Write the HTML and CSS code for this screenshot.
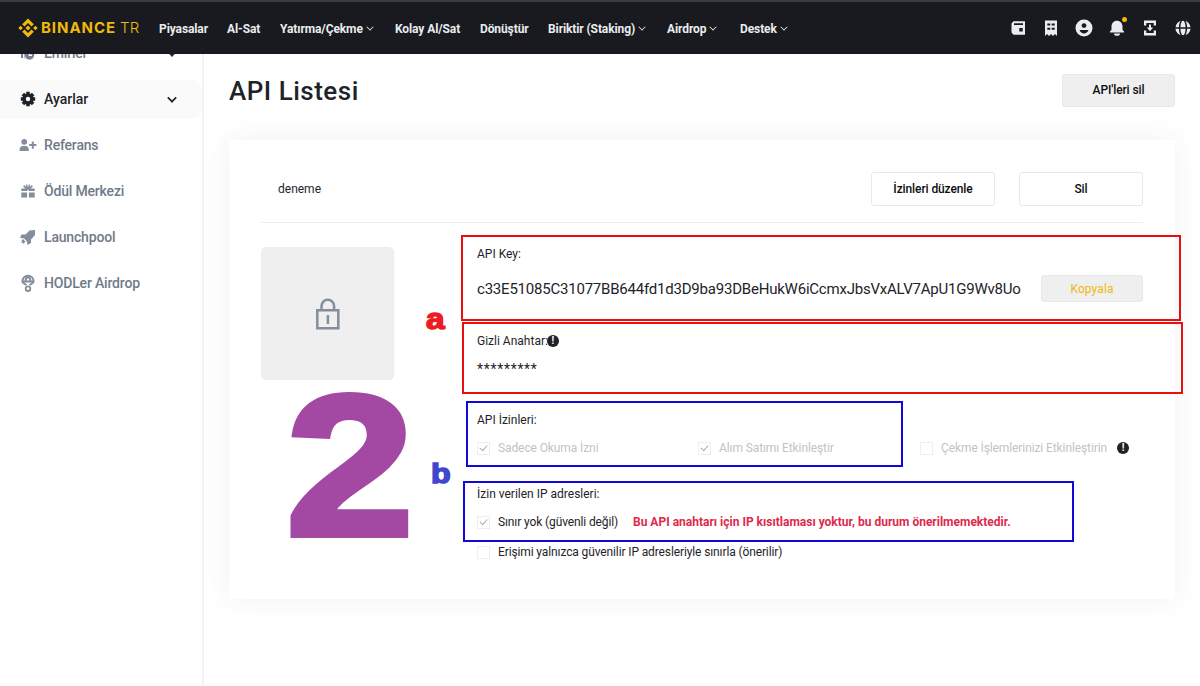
FILE: index.html
```html
<!DOCTYPE html>
<html lang="tr">
<head>
<meta charset="UTF-8">
<meta name="viewport" content="width=device-width, initial-scale=1.0">
<title>API Listesi</title>
<link rel="stylesheet" href="styles.css">
</head>
<body>
<header class="topbar">
<a class="logo">
<svg width="20" height="20" viewBox="0 0 20 20" fill="#f0b90b">
<path d="M10 0.4 15.8 6.2 13.5 8.4 10 4.9 6.5 8.4 4.2 6.2zM10 19.6 15.8 13.8 13.5 11.6 10 15.1 6.5 11.6 4.2 13.8zM2.6 7.7 4.9 10 2.6 12.3 0.3 10zM17.4 7.7 19.7 10 17.4 12.3 15.1 10zM10 7.4 12.6 10 10 12.6 7.4 10z"/>
</svg>
<span class="brand">BINANCE</span><span class="brand-tr">TR</span>
</a>
<nav class="menu">
<a>Piyasalar</a>
<a>Al-Sat</a>
<a class="w-cekme">Yatırma/Çekme</a>
<a>Kolay Al/Sat</a>
<a>Dönüştür</a>
<a class="w-staking">Biriktir (Staking)</a>
<a class="w-airdrop">Airdrop</a>
<a class="w-destek">Destek</a>
</nav>
<div class="tools">
<svg width="20" height="20" viewBox="0 0 20 20" fill="#eaecef"><path fill-rule="evenodd" d="M3.500 5.500 5.500 3.200H17v13.600H5.500L3.500 14.500zM6 5.200v1.800H15V5.200zM11.300 10v3.500H14.700V10z"/></svg>
<svg width="20" height="20" viewBox="0 0 20 20" fill="#eaecef"><path fill-rule="evenodd" d="M4 2.500h12V18l-2-2-2 2-2-2-2 2-2-2-2 2zM6.300 5.600v1.900h3V5.600zM10.700 5.600v1.900h3V5.600zM6.300 9.800v1.900h3V9.800zM10.700 9.800v1.900h3V9.800z"/></svg>
<svg width="20" height="20" viewBox="0 0 20 20"><circle cx="10" cy="10" r="8.500" fill="#eaecef"/><circle cx="10" cy="7.600" r="2.400" fill="#181a20"/><path d="M5.500 12h9c-.8 2.300-2.500 3.400-4.500 3.400S6.300 14.300 5.500 12z" fill="#181a20"/></svg>
<span class="bell"><svg width="20" height="20" viewBox="0 0 20 20" fill="#eaecef"><path d="M4.500 9c0-3.800 2.200-6.200 5.500-6.200s5.500 2.400 5.500 6.200v3l1.600 1.500v1H2.900v-1L4.500 12zM7 15.500h6a3 2.300 0 0 1-6 0z"/></svg><i class="dot"></i></span>
<svg width="20" height="20" viewBox="0 0 20 20" fill="#eaecef"><path d="M4 2.500h12v5h-2.300V5H6.300v2.500H4zM4 17.500h12v-5h-2.300V15H6.300v-2.500H4zM9 6.500h2v3h2.200L10 13.300 6.800 9.500H9z"/></svg>
<svg width="20" height="20" viewBox="0 0 20 20" fill="none" stroke="#181a20" stroke-width="1.500"><circle cx="10" cy="10" r="7.600" fill="#eaecef" stroke="none"/><ellipse cx="10" cy="10" rx="3.400" ry="8.200"/><path d="M2 10h16"/></svg>
</div>
</header>

<div class="page">
<aside class="sidebar">
<a class="side-item arrow">
<svg width="18" height="18" viewBox="0 0 18 18" fill="#76808f"><path d="M2 3h4v2H4v9H2zM7 3h2v3.500A5 5 0 0 0 5.500 11v3.500H5V8z"/><circle cx="10.500" cy="11" r="4.700"/><path d="M10.500 8v3.200H13" stroke="#fff" stroke-width="1.600" fill="none"/></svg>
<span>Emirler</span>
</a>
<a class="side-item arrow active">
<svg width="18" height="18" viewBox="0 0 18 18"><g fill="#1e2329"><circle cx="9" cy="9" r="5.700"/><path d="M7.200 1.800h3.600v14.400H7.200zM1.800 7.200h14.400v3.600H1.800z"/><path d="M7.200 1.800h3.600v14.400H7.200zM1.800 7.200h14.400v3.600H1.800z" transform="rotate(45 9 9)"/></g><circle cx="9" cy="9" r="2.200" fill="#fafafa"/></svg>
<span>Ayarlar</span>
</a>
<a class="side-item">
<svg width="18" height="18" viewBox="0 0 18 18" fill="#848e9c"><circle cx="5.200" cy="5.800" r="2.900"/><path d="M.7 15v-1.700c0-2 1.200-3.300 3-3.300h3c1.800 0 3 1.300 3 3.300V15zM12.800 5.500h2v2.600h2.600v2h-2.600v2.600h-2v-2.600h-2.600v-2h2.600z"/></svg>
<span>Referans</span>
</a>
<a class="side-item">
<svg width="18" height="18" viewBox="0 0 18 18" fill="#848e9c"><path d="M2.300 10.500h5.800v5H2.300zM9.900 10.500h5.800v5H9.900zM2.300 6.500h4L4 4.200l1.300-1.200 2 2-.4-2.500h1.300L9 5.200l.8-2.700h1.300L10.700 5l2-2L14 4.200l-2.300 2.300h4v2.400H9.900l-.9-1.700-.9 1.700H2.300z"/></svg>
<span>Ödül Merkezi</span>
</a>
<a class="side-item">
<svg width="18" height="18" viewBox="0 0 18 18" fill="#848e9c"><path d="M16 2v5L12 11.500V15l-3.500 2-.8-4L5 10.500 1 9.700 2.500 6.500h4L10.500 2.500z"/><path d="M4.200 11.300 6.800 14l-1.700.6.200 1.600-1.700-1.400-1.500.2 1-1.500-.6-1.600z"/></svg>
<span>Launchpool</span>
</a>
<a class="side-item">
<svg width="18" height="18" viewBox="0 0 18 18" fill="none" stroke="#848e9c"><path d="M3.300 8C3.300 4 5.800 1.800 9 1.800S14.700 4 14.700 8M2.500 7.500h13M6.500 7.500 7 4.500 9 3l2 1.500.5 3M3.500 8.500l4 2.500M14.500 8.500l-4 2.500" stroke-width="2"/><circle cx="9" cy="14.700" r="2.300" stroke-width="1.800"/></svg>
<span>HODLer Airdrop</span>
</a>
</aside>

<main class="content">
<div class="title-row">
<h1>API Listesi</h1>
<button class="btn btn-gray">API'leri sil</button>
</div>

<section class="card">
<div class="card-head">
<span class="key-name">deneme</span>
<button class="btn btn-white">İzinleri düzenle</button>
<button class="btn btn-white">Sil</button>
</div>
<div class="card-body">
<div class="qr-box">
<svg width="26" height="32" viewBox="0 0 26 32" fill="none" stroke="#848e9c" stroke-width="2.500"><path d="M2.300 12.300h21v18h-21zM6.500 12V8a6.300 6.300 0 0 1 12.600 0v4M12.900 17v9"/></svg>
</div>
<div class="details">
<div class="line">API Key:</div>
<div class="key-row">
<span class="api-key">c33E51085C31077BB644fd1d3D9ba93DBeHukW6iCcmxJbsVxALV7ApU1G9Wv8Uo</span>
<button class="btn btn-copy">Kopyala</button>
</div>
<div class="line secret"><span>Gizli Anahtar:</span><b class="info"></b></div>
<div class="line stars">*********</div>
<div class="line perm-title">API İzinleri:</div>
<div class="perms">
<label><i class="box checked"></i><span>Sadece Okuma İzni</span></label>
<label><i class="box checked"></i><span>Alım Satımı Etkinleştir</span></label>
<label><i class="box"></i><span>Çekme İşlemlerinizi Etkinleştirin</span><b class="info"></b></label>
</div>
<div class="line ip-title">İzin verilen IP adresleri:</div>
<div class="ip-row">
<i class="box checked"></i><span class="ip-free">Sınır yok (güvenli değil)</span>
<strong class="warn">Bu API anahtarı için IP kısıtlaması yoktur, bu durum önerilmemektedir.</strong>
</div>
<div class="ip-row last">
<i class="box"></i><span>Erişimi yalnızca güvenilir IP adresleriyle sınırla (önerilir)</span>
</div>
</div>
</div>
</section>
</main>
</div>

<!-- notes drawn over the page -->
<div class="mark red mark-key"></div>
<div class="mark red mark-secret"></div>
<div class="mark blue mark-perms"></div>
<div class="mark blue mark-ip"></div>
<span class="note note-a">a</span>
<span class="note note-b">b</span>
<span class="note note-2">2</span>
</body>
</html>
```
FILE: styles.css
```css
* {
box-sizing: border-box;
}

body {
margin: 0;
font-family: Roboto, "Noto Sans", sans-serif;
font-size: 12px;
color: #1e2329;
background: #fff;
height: 686px;
overflow: hidden;
position: relative;
}

/* header */
.topbar {
height: 54px;
background: #181a20;
border-top: 2px solid #3b3c3f;
display: flex;
align-items: center;
padding: 0 7px 0 18px;
position: relative;
z-index: 2;
}

.logo {
display: flex;
align-items: center;
width: 141px;
color: #f0b90b;
font-family: Inter, sans-serif;
font-size: 15px;
line-height: 20px;
}

.brand {
font-weight: 700;
letter-spacing: 0.95px;
margin-left: 3px;
width: 79px;
}

.brand-tr {
font-weight: 300;
letter-spacing: 0.3px;
}

.menu {
display: grid;
grid-template-columns: 68px 53px 115px 85px 68px 119px 73px 60px;
color: #eaecef;
font-weight: 700;
letter-spacing: -0.1px;
line-height: 20px;
padding-top: 1px;
white-space: nowrap;
}

.menu a {
display: flex;
align-items: center;
}

.w-cekme::after, .w-staking::after, .w-airdrop::after, .w-destek::after {
content: "";
width: 5px;
height: 5px;
margin: -3px 0 0 4px;
border: solid #eaecef;
border-width: 0 1.5px 1.5px 0;
transform: rotate(45deg) scale(0.85);
}

.tools {
display: flex;
gap: 13px;
margin-left: auto;
height: 20px;
}

.bell {
position: relative;
height: 20px;
}

.dot {
position: absolute;
right: 0;
top: -1px;
width: 5px;
height: 5px;
border-radius: 50%;
background: #f0b90b;
}

.page {
display: flex;
height: 632px;
}

/* sidebar */
.sidebar {
width: 204px;
flex: none;
border-right: 2px solid #f2f3f4;
margin-top: -20px;
display: flex;
flex-direction: column;
gap: 7px;
}

.side-item {
height: 39px;
flex: none;
display: flex;
align-items: center;
gap: 7px;
padding: 0 24px 1px 19px;
font-size: 14px;
font-weight: 500;
letter-spacing: -0.18px;
color: #707a8a;
}

.active {
background: #fafafa;
color: #1e2329;
letter-spacing: 0;
border-radius: 0 10px 10px 0;
}

.arrow::after {
content: "";
width: 6px;
height: 6px;
margin: -3px 2px 0 auto;
border: solid #1e2329;
border-width: 0 2px 2px 0;
transform: rotate(45deg) scale(0.85);
}

/* content */
.content {
flex: 1;
padding: 20px 25px 0;
}

.title-row {
display: flex;
justify-content: space-between;
height: 66px;
}

h1 {
margin: 0;
font-size: 26px;
line-height: 34px;
font-weight: 500;
letter-spacing: 0.5px;
}

.btn {
font: 500 12px/18px Roboto, "Noto Sans", sans-serif;
letter-spacing: -0.1px;
color: #0b0e11;
border: 1px solid #e6e8ea;
border-radius: 3px;
padding: 0;
height: 33px;
}

.btn-gray {
width: 113px;
background: #efefef;
padding-bottom: 1px;
}

.btn-white {
width: 124px;
height: 34px;
background: #fff;
margin-left: 24px;
}

.btn-copy {
width: 102px;
height: 27px;
background: #efefef;
color: #f0b90b;
font-weight: 400;
letter-spacing: 0.1px;
}

.card {
height: 459px;
padding: 0 32px;
background: #fff;
box-shadow: 0 0 25px rgba(24, 50, 75, 0.07);
}

.card-head {
height: 83px;
padding: 15px 0 0 17px;
display: flex;
align-items: center;
border-bottom: 1px solid #eaecef;
}

.key-name {
margin-right: auto;
}

.card-body {
display: grid;
grid-template-columns: 133px 666px;
justify-content: space-between;
align-items: start;
}

.qr-box {
height: 133px;
margin-top: 24px;
background: #efefef;
border: 1px solid #eaecef;
border-radius: 5px;
display: flex;
align-items: center;
justify-content: center;
}

.details {
padding-top: 21px;
white-space: nowrap;
}

.line {
height: 20px;
line-height: 20px;
display: flex;
align-items: center;
}

.key-row {
display: flex;
align-items: center;
justify-content: space-between;
height: 27px;
margin-top: 11px;
}

.api-key {
font-size: 15px;
letter-spacing: -0.215px;
}

.secret {
margin-top: 29px;
}

.stars {
margin-top: 8px;
font-size: 14px;
letter-spacing: 0.7px;
}

.perm-title {
margin-top: 31px;
}

.info {
width: 12px;
height: 12px;
border-radius: 50%;
background: #1e2329;
color: #fff;
font-size: 10px;
line-height: 12px;
text-align: center;
}

.info::before {
content: "!";
}

.secret .info {
margin-left: -1px;
}

.perms {
display: grid;
grid-template-columns: 221px 222px 222px;
height: 20px;
margin-top: 8px;
color: #c1c3c6;
letter-spacing: -0.1px;
}

.perms label, .ip-row {
display: flex;
align-items: center;
}

.perms .info {
margin-left: 10px;
}

.box {
width: 13px;
height: 13px;
border: 1px solid #eceef0;
margin-right: 8px;
display: flex;
justify-content: center;
}

.checked::after {
content: "";
width: 4px;
height: 7px;
border: solid #a6a9ad;
border-width: 0 1.5px 1.5px 0;
transform: rotate(42deg) scale(0.9);
}

.ip-title {
margin-top: 26px;
}

.ip-row {
height: 20px;
margin-top: 8px;
letter-spacing: -0.12px;
}

.ip-free {
width: 135px;
}

.warn {
color: #e0294a;
letter-spacing: 0;
}

.last {
margin-top: 10px;
}

/* notes */
.mark {
position: absolute;
border: 2px solid;
}

.red {
border-color: #e8100f;
}

.blue {
border-color: #1208dc;
}

.mark-key {
left: 461px;
top: 235px;
width: 720px;
height: 86px;
}

.mark-secret {
left: 462px;
top: 322px;
width: 721px;
height: 72px;
}

.mark-perms {
left: 466px;
top: 401px;
width: 437px;
height: 66px;
}

.mark-ip {
left: 463px;
top: 481px;
width: 611px;
height: 61px;
}

.note {
position: absolute;
font-family: "Liberation Sans", Arial, sans-serif;
font-weight: 700;
line-height: 1;
transform-origin: 0 0;
}

.note-a {
left: 426px;
top: 305px;
font-size: 29px;
color: #ed1c24;
transform: scaleX(1.15);
-webkit-text-stroke: 1.5px #ed1c24;
}

.note-b {
left: 431px;
top: 460px;
font-size: 28px;
color: #3f48cc;
transform: scaleX(1.15);
-webkit-text-stroke: 1.5px #3f48cc;
}

.note-2 {
left: 286px;
top: 366px;
font-size: 200px;
color: #a349a4;
transform: scaleX(1.15);
-webkit-text-stroke: 6px #a349a4;
}
```
